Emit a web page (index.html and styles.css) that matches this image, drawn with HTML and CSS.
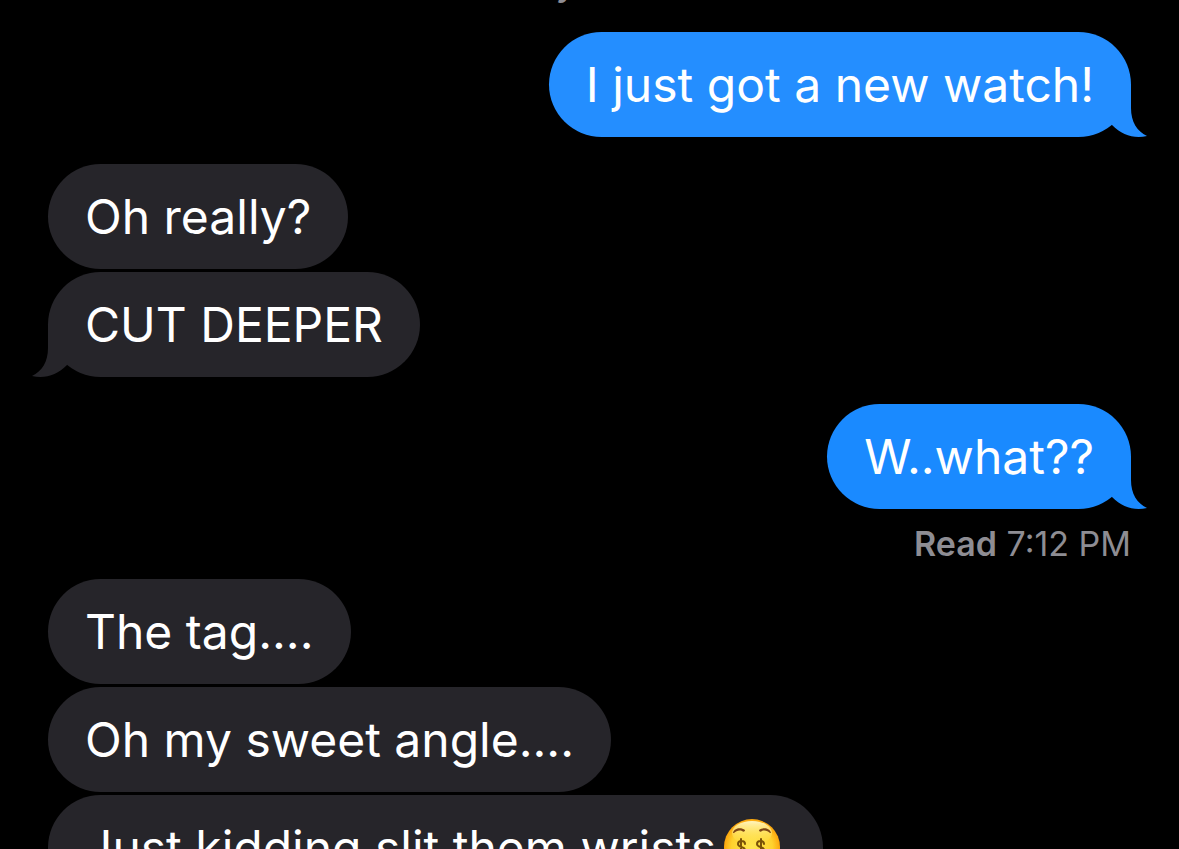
FILE: index.html
```
<!DOCTYPE html>
<html lang="en">
  <head>
    <meta charset="UTF-8" />
    <meta name="viewport" content="width=device-width, initial-scale=1.0" />
    <title>Messages</title>
    <link rel="stylesheet" href="styles.css">
  </head>
  <body>
    <main class="chat">
      <p class="timestamp">Today</p>

      <section class="group sent">
        <p class="bubble first">
          I just got a new watch!
          <svg class="tail" viewBox="0 0 36 53" aria-hidden="true">
            <path d="M20 0V24C20 38 26 47 36 52C23 55 11 51 1 41V0Z"/>
          </svg>
        </p>
      </section>

      <section class="group received">
        <p class="bubble">Oh really?</p>
        <p class="bubble">
          CUT DEEPER
          <svg class="tail" viewBox="0 0 36 53" aria-hidden="true">
            <path d="M20 0V24C20 38 26 47 36 52C23 55 11 51 1 41V0Z"/>
          </svg>
        </p>
      </section>

      <section class="group sent">
        <p class="bubble">
          W..what??
          <svg class="tail" viewBox="0 0 36 53" aria-hidden="true">
            <path d="M20 0V24C20 38 26 47 36 52C23 55 11 51 1 41V0Z"/>
          </svg>
        </p>
        <p class="receipt"><strong>Read</strong> 7:12 PM</p>
      </section>

      <section class="group received">
        <p class="bubble">The tag....</p>
        <p class="bubble">Oh my sweet angle....</p>
        <p class="bubble">
          Just kidding slit them wrists<svg class="emoji" viewBox="0 0 58 58" role="img" aria-label="Money-mouth face">
            <defs>
              <radialGradient id="face" cx="50%" cy="50%" r="52%">
                <stop offset="0" stop-color="#ffe650"/>
                <stop offset="0.7" stop-color="#ffd22e"/>
                <stop offset="1" stop-color="#fb9f08"/>
              </radialGradient>
              <linearGradient id="shine" x1="0" y1="0" x2="0" y2="1">
                <stop offset="0" stop-color="#fff6c0"/>
                <stop offset="1" stop-color="#ffe650" stop-opacity="0"/>
              </linearGradient>
            </defs>
            <circle cx="29" cy="29" r="28" fill="url(#face)"/>
            <ellipse cx="29" cy="15" rx="20" ry="12" fill="url(#shine)"/>
            <g fill="#7d4514">
              <path d="M10 15C11 10 18 9 22 12C22 14 20 14 19 13C16 12 13 13 11 15Z"/>
              <path d="M48 15C47 10 40 9 36 12C36 14 38 14 39 13C42 12 45 13 47 15Z"/>
            </g>
            <g fill="none" stroke="#7a5207" stroke-width="2" stroke-linecap="round">
              <path d="M22 26C22 22 15 22 15 26C15 30 22 28 22 32C22 36 15 36 15 32M18 21V37"/>
              <path d="M41 26C41 22 34 22 34 26C34 30 41 28 41 32C41 36 34 36 34 32M38 21V37"/>
            </g>
            <path d="M15 40C23 46 35 46 43 40" fill="none" stroke="#7a3d0c" stroke-width="3" stroke-linecap="round"/>
            <path d="M23 43H36V50C36 55 23 55 23 50Z" fill="#6cc04a"/>
          </svg>
        </p>
      </section>
    </main>
  </body>
</html>
```
FILE: styles.css
```
* {
  margin: 0;
  padding: 0;
  box-sizing: border-box;
}

body {
  background-color: #000000;
  color: #ffffff;
  height: 100vh;
  font-family: Inter, "Liberation Sans", sans-serif;
  overflow: hidden;
}

.chat {
  display: flex;
  flex-direction: column;
  gap: 27px;
  padding: 0 48px;
}

/* scrolled almost out of view */
.timestamp {
  margin-top: -35px;
  padding-right: 124px;
  color: #8e8d93;
  font-size: 32px;
  font-weight: 600;
  line-height: 40px;
  text-align: center;
}

.group {
  display: flex;
  flex-direction: column;
  align-items: flex-start;
  gap: 3px;
}

.group.sent {
  align-items: flex-end;
}

.bubble {
  position: relative;
  padding: 23px 37px 22px;
  border-radius: 53px;
  background-color: #26252a;
  font-size: 48px;
  line-height: 60px;
}

.sent .bubble {
  background-color: #1a8aff;
}

.sent .bubble.first {
  background-color: #248eff;
}

.tail {
  position: absolute;
  right: -16px;
  bottom: 0;
  width: 36px;
  height: 53px;
  fill: #26252a;
}

.sent .tail {
  fill: #1a8aff;
}

.sent .first .tail {
  fill: #248eff;
}

.received .tail {
  right: auto;
  left: -16px;
  transform: scaleX(-1);
}

.receipt {
  margin-bottom: -12px;
  padding-top: 12px;
  color: #8e8d93;
  font-size: 34px;
  line-height: 40px;
}

.receipt strong {
  font-weight: 600;
}

.emoji {
  width: 58px;
  height: 58px;
  margin: 0 5px 0 7px;
  vertical-align: -11px;
}
```
